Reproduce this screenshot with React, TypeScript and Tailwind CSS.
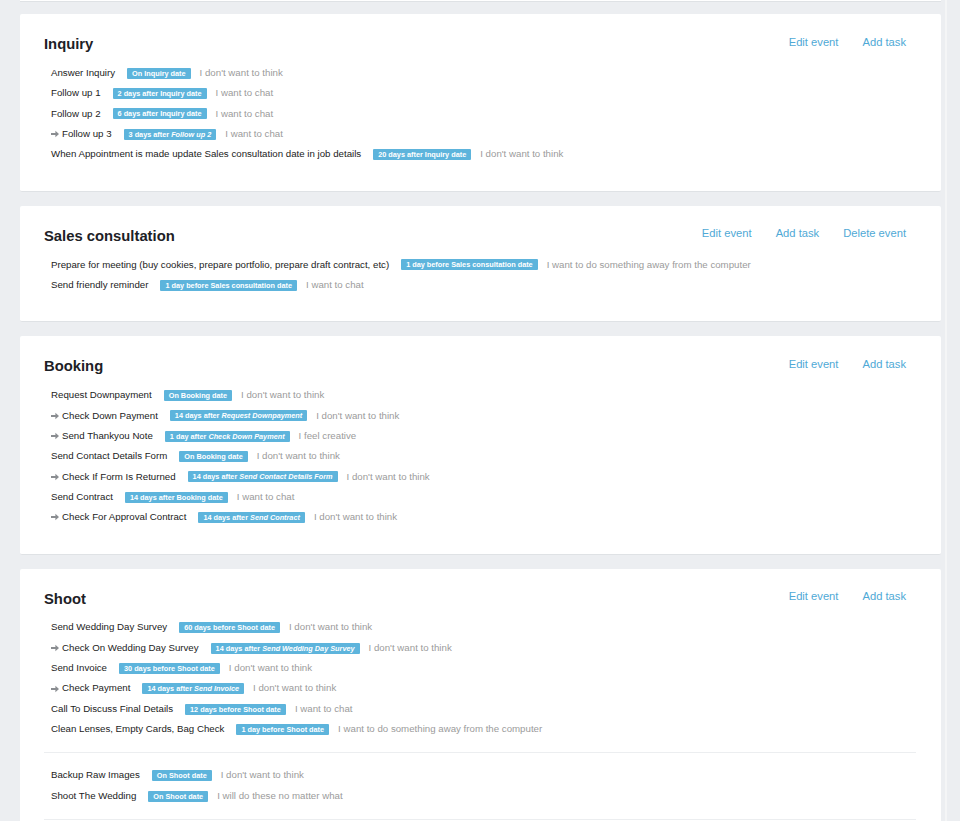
import React from 'react';

type Task = {
  name: string;
  arrow?: boolean;
  when: string;
  ref?: string;
  desc: string;
};

type Event = {
  title: string;
  canDelete?: boolean;
  groups: Task[][];
  trailingLine?: boolean;
};

const events: Event[] = [
  {
    title: 'Inquiry',
    groups: [[
      { name: 'Answer Inquiry', when: 'On Inquiry date', desc: "I don't want to think" },
      { name: 'Follow up 1', when: '2 days after Inquiry date', desc: 'I want to chat' },
      { name: 'Follow up 2', when: '6 days after Inquiry date', desc: 'I want to chat' },
      { name: 'Follow up 3', arrow: true, when: '3 days after ', ref: 'Follow up 2', desc: 'I want to chat' },
      { name: 'When Appointment is made update Sales consultation date in job details', when: '20 days after Inquiry date', desc: "I don't want to think" },
    ]],
  },
  {
    title: 'Sales consultation',
    canDelete: true,
    groups: [[
      { name: 'Prepare for meeting (buy cookies, prepare portfolio, prepare draft contract, etc)', when: '1 day before Sales consultation date', desc: 'I want to do something away from the computer' },
      { name: 'Send friendly reminder', when: '1 day before Sales consultation date', desc: 'I want to chat' },
    ]],
  },
  {
    title: 'Booking',
    groups: [[
      { name: 'Request Downpayment', when: 'On Booking date', desc: "I don't want to think" },
      { name: 'Check Down Payment', arrow: true, when: '14 days after ', ref: 'Request Downpayment', desc: "I don't want to think" },
      { name: 'Send Thankyou Note', arrow: true, when: '1 day after ', ref: 'Check Down Payment', desc: 'I feel creative' },
      { name: 'Send Contact Details Form', when: 'On Booking date', desc: "I don't want to think" },
      { name: 'Check If Form Is Returned', arrow: true, when: '14 days after ', ref: 'Send Contact Details Form', desc: "I don't want to think" },
      { name: 'Send Contract', when: '14 days after Booking date', desc: 'I want to chat' },
      { name: 'Check For Approval Contract', arrow: true, when: '14 days after ', ref: 'Send Contract', desc: "I don't want to think" },
    ]],
  },
  {
    title: 'Shoot',
    trailingLine: true,
    groups: [
      [
        { name: 'Send Wedding Day Survey', when: '60 days before Shoot date', desc: "I don't want to think" },
        { name: 'Check On Wedding Day Survey', arrow: true, when: '14 days after ', ref: 'Send Wedding Day Survey', desc: "I don't want to think" },
        { name: 'Send Invoice', when: '30 days before Shoot date', desc: "I don't want to think" },
        { name: 'Check Payment', arrow: true, when: '14 days after ', ref: 'Send Invoice', desc: "I don't want to think" },
        { name: 'Call To Discuss Final Details', when: '12 days before Shoot date', desc: 'I want to chat' },
        { name: 'Clean Lenses, Empty Cards, Bag Check', when: '1 day before Shoot date', desc: 'I want to do something away from the computer' },
      ],
      [
        { name: 'Backup Raw Images', when: 'On Shoot date', desc: "I don't want to think" },
        { name: 'Shoot The Wedding', when: 'On Shoot date', desc: 'I will do these no matter what' },
      ],
    ],
  },
];

function Arrow() {
  return (
    <svg width="8" height="8" viewBox="0 0 8 8" className="mr-[3px] shrink-0">
      <path d="M0 3h4.4V0.8L8 4 4.4 7.2V5H0z" fill="#8a8d91" />
    </svg>
  );
}

function TaskRow({ task }: { task: Task }) {
  return (
    <div className="flex items-center h-[20.33px] whitespace-nowrap">
      {task.arrow && <Arrow />}
      <span className="text-[#222]">{task.name}</span>
      <span className="ml-[12px] h-[11px] px-[5px] leading-[11px] rounded-[1px] bg-[#5db4dc] text-white text-[7.3px] font-bold">
        {task.when}
        {task.ref && <i>{task.ref}</i>}
      </span>
      <span className="ml-[9px] text-[#9b9b9b]">{task.desc}</span>
    </div>
  );
}

function EventCard({ event }: { event: Event }) {
  return (
    <div className="bg-white rounded-[2px] border-b border-[#dfe2e5] pt-[20px] pb-[26px] pl-[24px] pr-[25px]">
      <div className="flex items-center justify-between h-[20px]">
        <h2 className="text-[14.8px] font-bold text-[#1d2126] leading-[20px]">{event.title}</h2>
        <div className="flex gap-[24px] pr-[10px] pb-[4px] text-[11.2px] text-[#4fa9d6]">
          <span>Edit event</span>
          <span>Add task</span>
          {event.canDelete && <span>Delete event</span>}
        </div>
      </div>
      <div className="mt-[9px]">
        {event.groups.map((group, gi) => (
          <div
            key={gi}
            className={gi > 0 ? 'mt-[12px] border-t border-[#eceef0] pt-[13px] pl-[7px]' : 'pl-[7px]'}
          >
            {group.map((task, ti) => (
              <TaskRow key={ti} task={task} />
            ))}
          </div>
        ))}
        {event.trailingLine && <div className="mt-[13px] border-t border-[#eceef0] h-[20px]" />}
      </div>
    </div>
  );
}

export default function App() {
  return (
    <div
      className="flex min-h-[821px] bg-[#eceef1] text-[9.7px]"
      style={{ fontFamily: '"Liberation Sans", Arial, sans-serif' }}
    >
      <div className="w-[945px] pl-[20px] pr-[4px]">
        <div className="h-[2px] bg-white border-b border-[#dfe2e5] mb-[12px]" />
        <div className="flex flex-col gap-[14px]">
          {events.map((ev) => (
            <EventCard key={ev.title} event={ev} />
          ))}
        </div>
      </div>
      <div className="w-[15px] border-l-2 border-[#f4f5f6] bg-[#eceef1]" />
    </div>
  );
}
